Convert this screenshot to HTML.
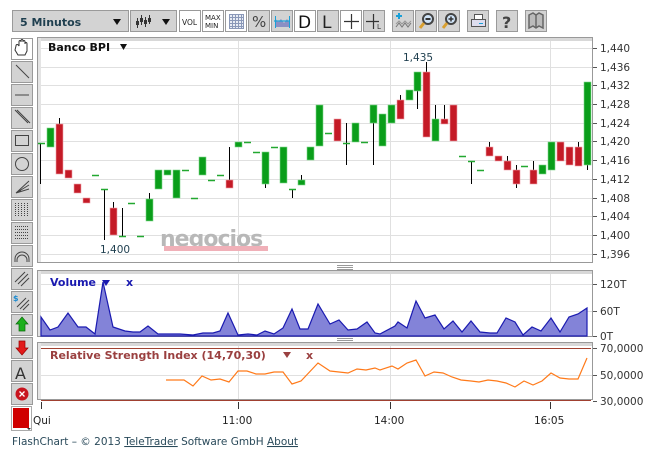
<!DOCTYPE html>
<html><head><meta charset="utf-8"><style>
html,body{margin:0;padding:0;background:#fff;width:661px;height:464px;overflow:hidden;font-family:"DejaVu Sans","Liberation Sans",sans-serif}
svg{position:absolute;left:0;top:0}
</style></head><body>
<svg width="661" height="464" viewBox="0 0 661 464" font-family="DejaVu Sans, Liberation Sans, sans-serif">
<!-- top toolbar -->
<g stroke="#9a9a9a" stroke-width="1">
<rect x="12.5" y="10.5" width="116" height="21" fill="#d3d3d3"/>
<rect x="130.5" y="10.5" width="46" height="21" fill="#d3d3d3"/>
<rect x="179.5" y="10.5" width="21" height="21" fill="#fff"/>
<rect x="202.5" y="10.5" width="21" height="21" fill="#fff"/>
<rect x="225.5" y="10.5" width="21" height="21" fill="#fff"/>
<rect x="248.5" y="10.5" width="21" height="21" fill="#d3d3d3"/>
<rect x="271.5" y="10.5" width="21" height="21" fill="#d3d3d3"/>
<rect x="294.5" y="10.5" width="21" height="21" fill="#fff"/>
<rect x="317.5" y="10.5" width="21" height="21" fill="#d3d3d3"/>
<rect x="340.5" y="10.5" width="21" height="21" fill="#fff"/>
<rect x="363.5" y="10.5" width="21" height="21" fill="#d3d3d3"/>
<rect x="392.5" y="10.5" width="21" height="21" fill="#d3d3d3"/>
<rect x="415.5" y="10.5" width="21" height="21" fill="#d3d3d3"/>
<rect x="438.5" y="10.5" width="21" height="21" fill="#d3d3d3"/>
<rect x="467.5" y="10.5" width="21" height="21" fill="#d3d3d3"/>
<rect x="496.5" y="10.5" width="21" height="21" fill="#d3d3d3"/>
<rect x="525.5" y="10.5" width="21" height="21" fill="#d3d3d3"/>
</g>
<text x="20" y="26" font-size="11" font-weight="bold" fill="#1f3f4f">5 Minutos</text>
<path d="M113 19h8l-4 6z" fill="#111"/>
<path d="M162 19h8l-4 6z" fill="#111"/>
<g stroke="#333" stroke-width="1" fill="none"><path d="M137.5 18v10M141.5 15v10M145.5 17v10M149.5 15v9"/></g>
<g fill="#333"><rect x="136" y="21" width="3" height="4"/><rect x="140" y="18" width="3" height="4"/><rect x="144" y="20" width="3" height="4"/><rect x="148" y="18" width="3" height="4"/></g>
<text x="182" y="25" font-size="7.5" fill="#222">VOL</text>
<text x="205" y="20" font-size="7" fill="#222">MAX</text>
<text x="205" y="28" font-size="7" fill="#222">MIN</text>
<g stroke="#8a98b8" stroke-width="1"><rect x="229.5" y="14.5" width="14" height="14" fill="#e8ecf4"/><path d="M232.5 14v15M235.5 14v15M238.5 14v15M241.5 14v15M229 17.5h15M229 20.5h15M229 23.5h15M229 26.5h15"/></g>
<text x="252" y="27" font-size="15" fill="#444">%</text>
<path d="M275 27v-9l3 4 3-3 3 4 3-4 2 3v5z" fill="#8b8fc4"/><path d="M274 21h16" stroke="#19a0d8" stroke-width="1.2"/><path d="M275.5 16v12M289.5 16v12" stroke="#19a0d8"/>
<text x="298" y="28" font-size="17" fill="#111">D</text>
<text x="322" y="28" font-size="17" fill="#222">L</text>
<path d="M344 21.5h15M351.5 14v15" stroke="#333" stroke-width="1.2"/>
<path d="M366 21.5h13M373.5 14v15" stroke="#333" stroke-width="1.2"/><text x="377" y="29" font-size="7" fill="#333">L</text>
<path d="M396 27l3-4 3 4 3-4 3 4 3-4" stroke="#777" fill="none"/><path d="M396 24l3-3 3 3 3-3 3 3 3-3" stroke="#999" fill="none"/><path d="M396 16h6M399 13v6" stroke="#19a0d8" stroke-width="2"/>
<g fill="none" stroke-width="2"><circle cx="428" cy="19" r="5" stroke="#444" fill="#cfe3f7"/><path d="M424 23l-4 5" stroke="#d9a030" stroke-width="3"/><path d="M425.5 19h5" stroke="#333"/>
<circle cx="451" cy="19" r="5" stroke="#444" fill="#cfe3f7"/><path d="M447 23l-4 5" stroke="#d9a030" stroke-width="3"/><path d="M448.5 19h5M451 16.5v5" stroke="#333" stroke-width="1.5"/></g>
<g fill="#fff" stroke="#555"><rect x="474.5" y="14.5" width="8" height="6"/><rect x="471.5" y="19.5" width="14" height="7" fill="#dde"/></g><rect x="479" y="23" width="4" height="1" fill="#19a0d8"/>
<text x="502" y="28" font-size="16" font-weight="bold" fill="#444">?</text>
<path d="M529 15l4-2 3 2 3-2 4 2v13l-4-2-3 2-3-2-4 2z" fill="#bbb" stroke="#666" stroke-width="1.5"/><path d="M536 15v13" stroke="#666" stroke-width="1.5"/>

<!-- left toolbar -->
<g stroke="#9a9a9a" fill="#d3d3d3">
<rect x="11.5" y="38.5" width="21" height="21" fill="#fff"/>
<rect x="11.5" y="61.5" width="21" height="21"/><rect x="11.5" y="84.5" width="21" height="21"/><rect x="11.5" y="107.5" width="21" height="21"/>
<rect x="11.5" y="130.5" width="21" height="21"/><rect x="11.5" y="153.5" width="21" height="21"/><rect x="11.5" y="176.5" width="21" height="21"/>
<rect x="11.5" y="199.5" width="21" height="21"/><rect x="11.5" y="222.5" width="21" height="21"/><rect x="11.5" y="245.5" width="21" height="21"/>
<rect x="11.5" y="268.5" width="21" height="21"/><rect x="11.5" y="291.5" width="21" height="21"/><rect x="11.5" y="314.5" width="21" height="21"/>
<rect x="11.5" y="337.5" width="21" height="21"/><rect x="11.5" y="360.5" width="21" height="21"/><rect x="11.5" y="383.5" width="21" height="21"/>
</g>
<path d="M16 46c0-2 2-2 3 0l0-4c0-2 2-2 2 0v-1c0-2 2-2 2 0v1c0-2 2-2 2 0v2c0-2 2-2 2 0v7l-2 4h-7l-3-5z" fill="#fff" stroke="#333"/>
<g stroke="#444" fill="none" stroke-width="1">
<path d="M16 65l13 13"/>
<path d="M15 95h14"/>
<path d="M15 110l13 13M17 110l13 13"/>
<rect x="15.5" y="135.5" width="13" height="10"/>
<circle cx="22" cy="164" r="6.5"/>
<path d="M16 193l13-12M16 193l13-8M16 193l13-4M16 193l5-2"/>
<path d="M15.5 203v13M18.5 203v13M21.5 203v13M24.5 203v13M27.5 203v13" stroke-dasharray="1 1"/>
<path d="M15 226.5h14M15 229.5h14M15 232.5h14M15 235.5h14M15 238.5h14" stroke-dasharray="1 1"/>
<path d="M15 262v-3a7 7 0 0 1 14 0v3M17 262v-2a5 5 0 0 1 10 0v2"/>
<path d="M15 282l10-10M18 284l10-10M21 286l8-8"/>
<path d="M17 307l9-9M20 309l9-9M23 310l6-6"/>
</g>
<text x="13" y="301" font-size="8" font-weight="bold" fill="#1a8ad0">$</text>
<path d="M22 317l6 7h-3v7h-6v-7h-3z" fill="#1cb01c" stroke="#0a6a0a" stroke-width=".7"/>
<path d="M22 355l6-7h-3v-7h-6v7h-3z" fill="#e21a1a" stroke="#900" stroke-width=".7"/>
<text x="15" y="379" font-size="16" fill="#333">A</text>
<circle cx="22" cy="394" r="6.5" fill="#c8141e"/><path d="M19.5 391.5l5 5M24.5 391.5l-5 5" stroke="#fff" stroke-width="1.3"/>
<rect x="11.5" y="406.5" width="20" height="24" fill="#fff" stroke="#aaa"/><rect x="13" y="408" width="16" height="20" fill="#d00000"/><path d="M27 428h4l-2 2z" fill="#333"/>

<!-- main panel -->
<rect x="37.5" y="37.5" width="555" height="225" fill="#fff" stroke="#999"/>
<rect x="38" y="38" width="554" height="3" fill="#d8d8d8"/><rect x="38" y="38" width="3" height="224" fill="#e4e4e4"/>
<g stroke="#e0e0e0" stroke-width="1">
<path d="M41 48.5h551M41 67.5h551M41 85.5h551M41 104.5h551M41 123.5h551M41 141.5h551M41 160.5h551M41 179.5h551M41 198.5h551M41 216.5h551M41 235.5h551M41 254.5h551"/>
<path d="M238.5 41v221M390.5 41v221M550.5 41v221"/>
</g>
<text x="48" y="51" font-size="11" font-weight="bold" fill="#111">Banco BPI</text><path d="M120 44h7l-3.5 6z" fill="#111"/>
<text x="160" y="246" font-size="22" font-weight="bold" fill="#b8b8b8" letter-spacing="-1">negocios</text>
<rect x="164" y="246" width="104" height="5" fill="#f0b0b8"/>
<g stroke="#000" stroke-width="1">
<path d="M40.5 143v41M59.5 118v6M104.5 189v51M113.5 202v6M122.5 208v28M149.5 193v6M229.5 147v33M265.5 184v4M292.5 189v9M301.5 175v5M346.5 123v42M373.5 123v42M400.5 95v5M417.5 91v18M426.5 62v10M435.5 105v14M444.5 105v14M471.5 161v23M489.5 142v5M507.5 156v5M516.5 165v23M533.5 161v9M578.5 142v5M587.5 165v5"/>
</g>
<g fill="#0a9e1a" stroke="#7fd88a" stroke-width=".6">
<rect x="47" y="128" width="7" height="19"/><rect x="146" y="199" width="7" height="22"/><rect x="155" y="170" width="7" height="19"/><rect x="164" y="170" width="7" height="5"/><rect x="173" y="170" width="7" height="28"/><rect x="199" y="157" width="7" height="18"/><rect x="235" y="142" width="7" height="5"/><rect x="262" y="152" width="7" height="32"/><rect x="280" y="147" width="7" height="36"/><rect x="298" y="180" width="7" height="5"/><rect x="307" y="147" width="7" height="13"/><rect x="316" y="105" width="7" height="41"/><rect x="352" y="123" width="7" height="19"/><rect x="370" y="105" width="7" height="18"/><rect x="379" y="114" width="7" height="32"/><rect x="388" y="105" width="7" height="18"/><rect x="406" y="90" width="7" height="10"/><rect x="414" y="72" width="7" height="19"/><rect x="432" y="119" width="7" height="22"/><rect x="539" y="165" width="7" height="9"/><rect x="548" y="142" width="7" height="28"/><rect x="584" y="82" width="7" height="83"/>
</g>
<g fill="#c41a26" stroke="#f0a0a8" stroke-width=".6">
<rect x="56" y="124" width="7" height="50"/><rect x="65" y="170" width="7" height="8"/><rect x="74" y="184" width="7" height="9"/><rect x="83" y="198" width="7" height="5"/><rect x="110" y="208" width="7" height="27"/><rect x="226" y="180" width="7" height="8"/><rect x="334" y="119" width="7" height="22"/><rect x="397" y="100" width="7" height="19"/><rect x="423" y="72" width="7" height="65"/><rect x="441" y="119" width="7" height="5"/><rect x="450" y="105" width="7" height="36"/><rect x="486" y="147" width="7" height="9"/><rect x="495" y="156" width="7" height="5"/><rect x="504" y="161" width="7" height="9"/><rect x="513" y="170" width="7" height="14"/><rect x="530" y="170" width="7" height="14"/><rect x="557" y="142" width="7" height="19"/><rect x="566" y="147" width="7" height="18"/><rect x="575" y="147" width="7" height="19"/>
</g>
<g stroke="#22a830" stroke-width="1.4">
<path d="M38 143.5h7M92 175.5h7M101 189.5h7M119 236.5h7M128 203.5h7M137 236.5h7M182 170.5h7M191 198.5h7M208 180.5h7M217 175.5h7M244 142.5h7M253 152.5h7M271 147.5h7M289 189.5h7M325 133.5h7M343 143.5h7M361 142.5h7M459 156.5h7M468 161.5h7M477 170.5h7M521 166.5h7"/>
</g>
<text x="100" y="253" font-size="10.5" fill="#1f3f4f">1,400</text>
<text x="403" y="61" font-size="10.5" fill="#1f3f4f">1,435</text>
<g stroke="#555"><path d="M593 48.5h4M593 67.5h4M593 85.5h4M593 104.5h4M593 123.5h4M593 141.5h4M593 160.5h4M593 179.5h4M593 198.5h4M593 216.5h4M593 235.5h4M593 254.5h4"/></g>
<g font-size="10.5" fill="#333">
<text x="600" y="52">1,440</text><text x="600" y="71">1,436</text><text x="600" y="89">1,432</text><text x="600" y="108">1,428</text><text x="600" y="127">1,424</text><text x="600" y="145">1,420</text><text x="600" y="164">1,416</text><text x="600" y="183">1,412</text><text x="600" y="202">1,408</text><text x="600" y="220">1,404</text><text x="600" y="239">1,400</text><text x="600" y="258">1,396</text>
</g>
<path d="M337 265.5h16M337 267.5h16M337 269.5h16" stroke="#999"/>

<!-- volume panel -->
<rect x="37.5" y="270.5" width="555" height="66" fill="#fff" stroke="#999"/>
<rect x="38" y="271" width="554" height="3" fill="#d8d8d8"/><rect x="38" y="271" width="3" height="65" fill="#e4e4e4"/>
<g stroke="#e0e0e0"><path d="M41 284.5h551M41 311.5h551M238.5 274v62M390.5 274v62M550.5 274v62"/></g>
<path d="M41 336L41 317L50 330L58 327L68 313L78 327L86 327L95 334L103 282L113 327L125 331L133 332L140 332L148 326L158 334L180 334L193 335L203 333L213 333L220 331L228 313L238 335L248 334L257 335L265 331L274 334L283 328L292 309L300 329L308 329L318 304L330 324L339 320L348 330L357 329L367 322L375 333L380 334L395 326L398 322L407 328L416 301L425 318L435 315L444 329L453 321L462 332L471 321L480 332L490 333L497 333L506 318L515 322L523 335L532 327L541 331L551 318L560 332L569 317L578 314L587 308L587 336Z" fill="#8383d8" stroke="#1a1ab0" stroke-width="1.2"/>
<text x="50" y="286" font-size="11" font-weight="bold" fill="#1a1ab0">Volume</text><path d="M102 280h8l-4 6z" fill="#1a1ab0"/><text x="126" y="286" font-size="11" font-weight="bold" fill="#1a1ab0">x</text>
<g stroke="#555"><path d="M593 284.5h4M593 311.5h4M593 336.5h4"/></g>
<g font-size="10.5" fill="#333"><text x="600" y="288">120T</text><text x="600" y="315">60T</text><text x="600" y="340">0T</text></g>
<path d="M337 338.5h16M337 340.5h16" stroke="#999"/>

<!-- RSI panel -->
<rect x="37.5" y="342.5" width="555" height="57" fill="#fff" stroke="#999"/>
<rect x="38" y="343" width="554" height="3" fill="#d8d8d8"/><rect x="38" y="343" width="3" height="56" fill="#e4e4e4"/>
<g stroke="#e0e0e0"><path d="M41 375.5h551M238.5 346v53M390.5 346v53"/></g>
<path d="M41 348.5h550M41 400.5h550" stroke="#a04030" stroke-width="1"/>
<polyline points="166,380 184,380 193,386 202,376 211,380 220,379 229,382 238,371 247,371 256,374 265,374 274,372 283,372 292,384 301,381 318,363 330,371 339,372 348,373 357,369 366,370 375,368 380,370 392,366 398,369 407,363 416,360 425,376 434,372 443,373 452,377 461,380 471,381 479,382 488,380 497,381 506,383 515,387 524,381 533,385 542,381 551,373 560,378 569,379 578,379 587,358" fill="none" stroke="#ff7a1a" stroke-width="1.2"/>
<text x="50" y="359" font-size="11" font-weight="bold" fill="#9a4040">Relative Strength Index (14,70,30)</text><path d="M283 352h8l-4 6z" fill="#9a4040"/><text x="306" y="359" font-size="11" font-weight="bold" fill="#9a4040">x</text>
<g stroke="#555"><path d="M593 348.5h4M593 375.5h4M593 401.5h4"/></g>
<g font-size="10.5" fill="#333"><text x="600" y="352">70,0000</text><text x="600" y="379">50,0000</text><text x="600" y="405">30,0000</text></g>

<path d="M41.5 402v7M238.5 402v7M390.5 402v7M550.5 402v7" stroke="#333"/>
<g font-size="10.5" fill="#222"><text x="33" y="424">Qui</text><text x="222" y="424">11:00</text><text x="374" y="424">14:00</text><text x="534" y="424">16:05</text></g>
<text x="12" y="445" font-size="10.5" fill="#2a4a5a">FlashChart – © 2013 <tspan text-decoration="underline">TeleTrader</tspan> Software GmbH <tspan text-decoration="underline">About</tspan></text>
</svg>
</body></html>
